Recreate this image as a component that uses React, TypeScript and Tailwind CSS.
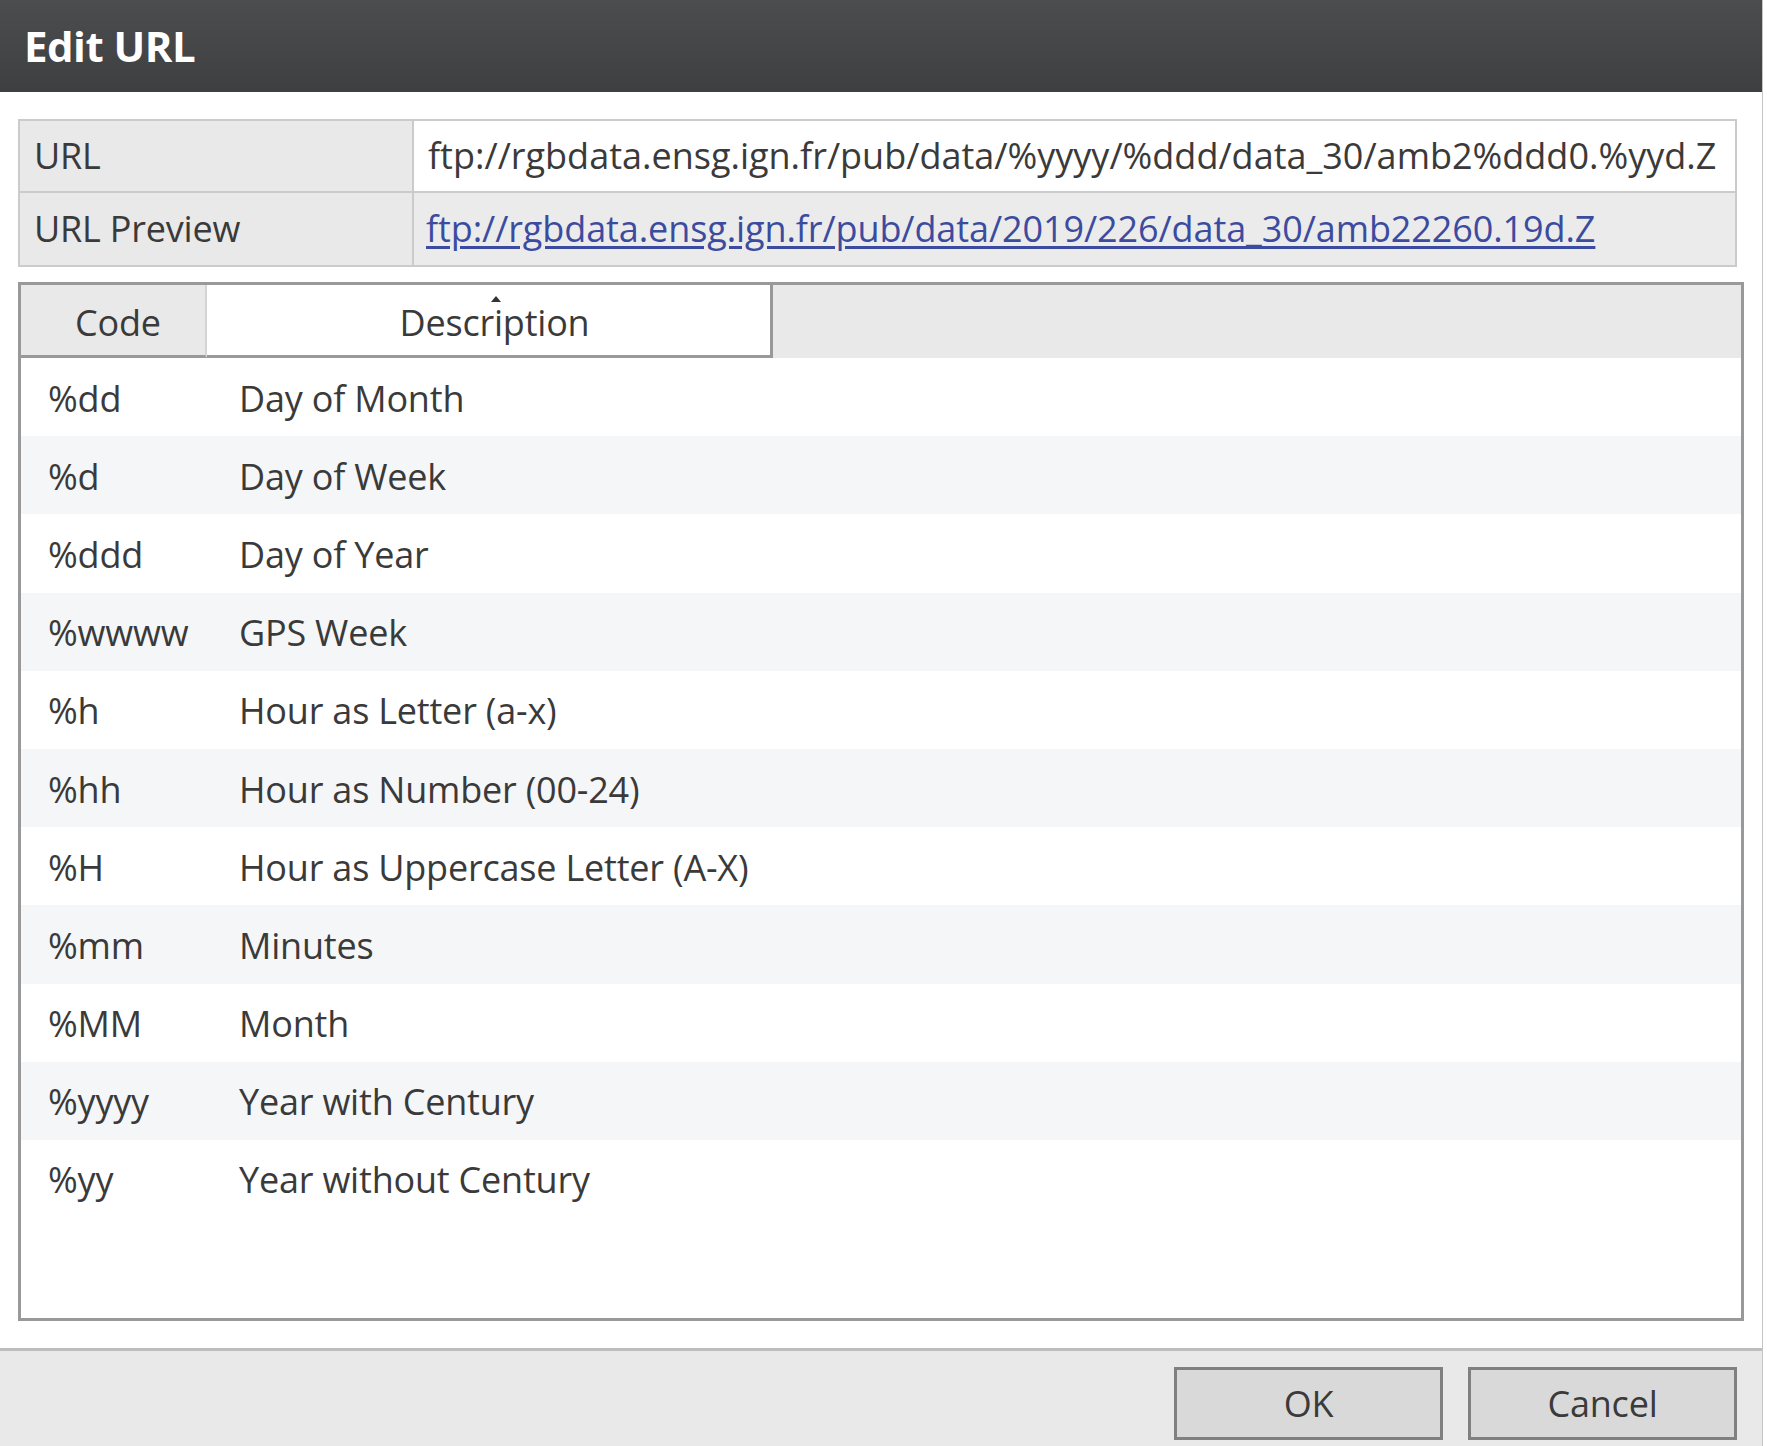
import React from 'react'

const codes = [
  ['%dd', 'Day of Month'],
  ['%d', 'Day of Week'],
  ['%ddd', 'Day of Year'],
  ['%wwww', 'GPS Week'],
  ['%h', 'Hour as Letter (a-x)'],
  ['%hh', 'Hour as Number (00-24)'],
  ['%H', 'Hour as Uppercase Letter (A-X)'],
  ['%mm', 'Minutes'],
  ['%MM', 'Month'],
  ['%yyyy', 'Year with Century'],
  ['%yy', 'Year without Century'],
]

export default function App() {
  return (
    <div className="w-[1767px] h-[1446px] bg-white font-['Open_Sans',sans-serif] text-[#3a3a3a] tracking-[-0.2px] overflow-hidden">
      <div className="w-[1763px] h-full flex flex-col border-r border-[#c4c4c4]">
        {/* title bar */}
        <div className="h-[92px] shrink-0 flex items-center pl-[24px] bg-linear-to-b from-[#4c4d4e] to-[#3e3f40]">
          <h1 className="text-[42px] font-bold text-white leading-none tracking-[-0.5px]">Edit URL</h1>
        </div>

        <div className="flex-1 flex flex-col px-[18px] pt-[27px] pb-[27px]">
          {/* url fields */}
          <div className="w-[1719px] border-2 border-[#cbcbcb] text-[36px]">
            <div className="flex h-[72px] border-b-2 border-[#cbcbcb]">
              <div className="w-[394px] shrink-0 flex items-center pl-[14px] bg-[#e9e9e9] border-r-2 border-[#cbcbcb]">
                URL
              </div>
              <div className="flex-1 flex items-center pl-[14px] bg-white whitespace-nowrap overflow-hidden tracking-[0px]">
                ftp://rgbdata.ensg.ign.fr/pub/data/%yyyy/%ddd/data_30/amb2%ddd0.%yyd.Z
              </div>
            </div>
            <div className="flex h-[72px]">
              <div className="w-[394px] shrink-0 flex items-center pl-[14px] bg-[#e9e9e9] border-r-2 border-[#cbcbcb]">
                URL Preview
              </div>
              <div className="flex-1 flex items-center pl-[12px] bg-[#ebebeb] whitespace-nowrap tracking-[-0.1px]">
                <a href="#" className="text-[#3b4ca0] underline underline-offset-4">
                  ftp://rgbdata.ensg.ign.fr/pub/data/2019/226/data_30/amb22260.19d.Z
                </a>
              </div>
            </div>
          </div>

          {/* code list */}
          <div className="mt-[15px] flex-1 flex flex-col border-[3px] border-[#999] text-[36px]">
            <div className="flex h-[73px] shrink-0 bg-[#e9e9e9]">
              <div className="w-[186px] flex items-center justify-center pt-[5px] pl-[10px] border-r-2 border-r-[#d4d4d4] border-b-[3px] border-b-[#999]">
                Code
              </div>
              <div className="relative w-[566px] flex items-center justify-center pt-[5px] pl-[12px] bg-white border-r-[3px] border-b-[3px] border-[#999]">
                <span className="absolute top-[11px] left-1/2 translate-x-[2px] w-0 h-0 border-l-[5px] border-r-[5px] border-b-[6px] border-l-transparent border-r-transparent border-b-[#333]" />
                Description
              </div>
              <div className="flex-1" />
            </div>
            <div className="flex-1 bg-white">
              {codes.map(([code, desc], i) => (
                <div
                  key={code}
                  className={`flex items-center pt-[3px] h-[78.2px] ${i % 2 === 1 ? 'bg-[#f5f6f7]' : 'bg-white'}`}
                >
                  <div className="w-[218px] pl-[27px]">{code}</div>
                  <div>{desc}</div>
                </div>
              ))}
            </div>
          </div>
        </div>

        {/* footer */}
        <div className="h-[98px] shrink-0 flex items-start justify-end gap-[25px] pt-[16px] pr-[25px] bg-[#e9e9e9] border-t-[3px] border-[#bdbdbd]">
          <button className="w-[269px] h-[73px] border-[3px] border-[#808080] bg-[#d9d9d9] text-[36px] text-[#3a3a3a]">
            OK
          </button>
          <button className="w-[269px] h-[73px] border-[3px] border-[#808080] bg-[#d9d9d9] text-[36px] text-[#3a3a3a]">
            Cancel
          </button>
        </div>
      </div>
    </div>
  )
}
